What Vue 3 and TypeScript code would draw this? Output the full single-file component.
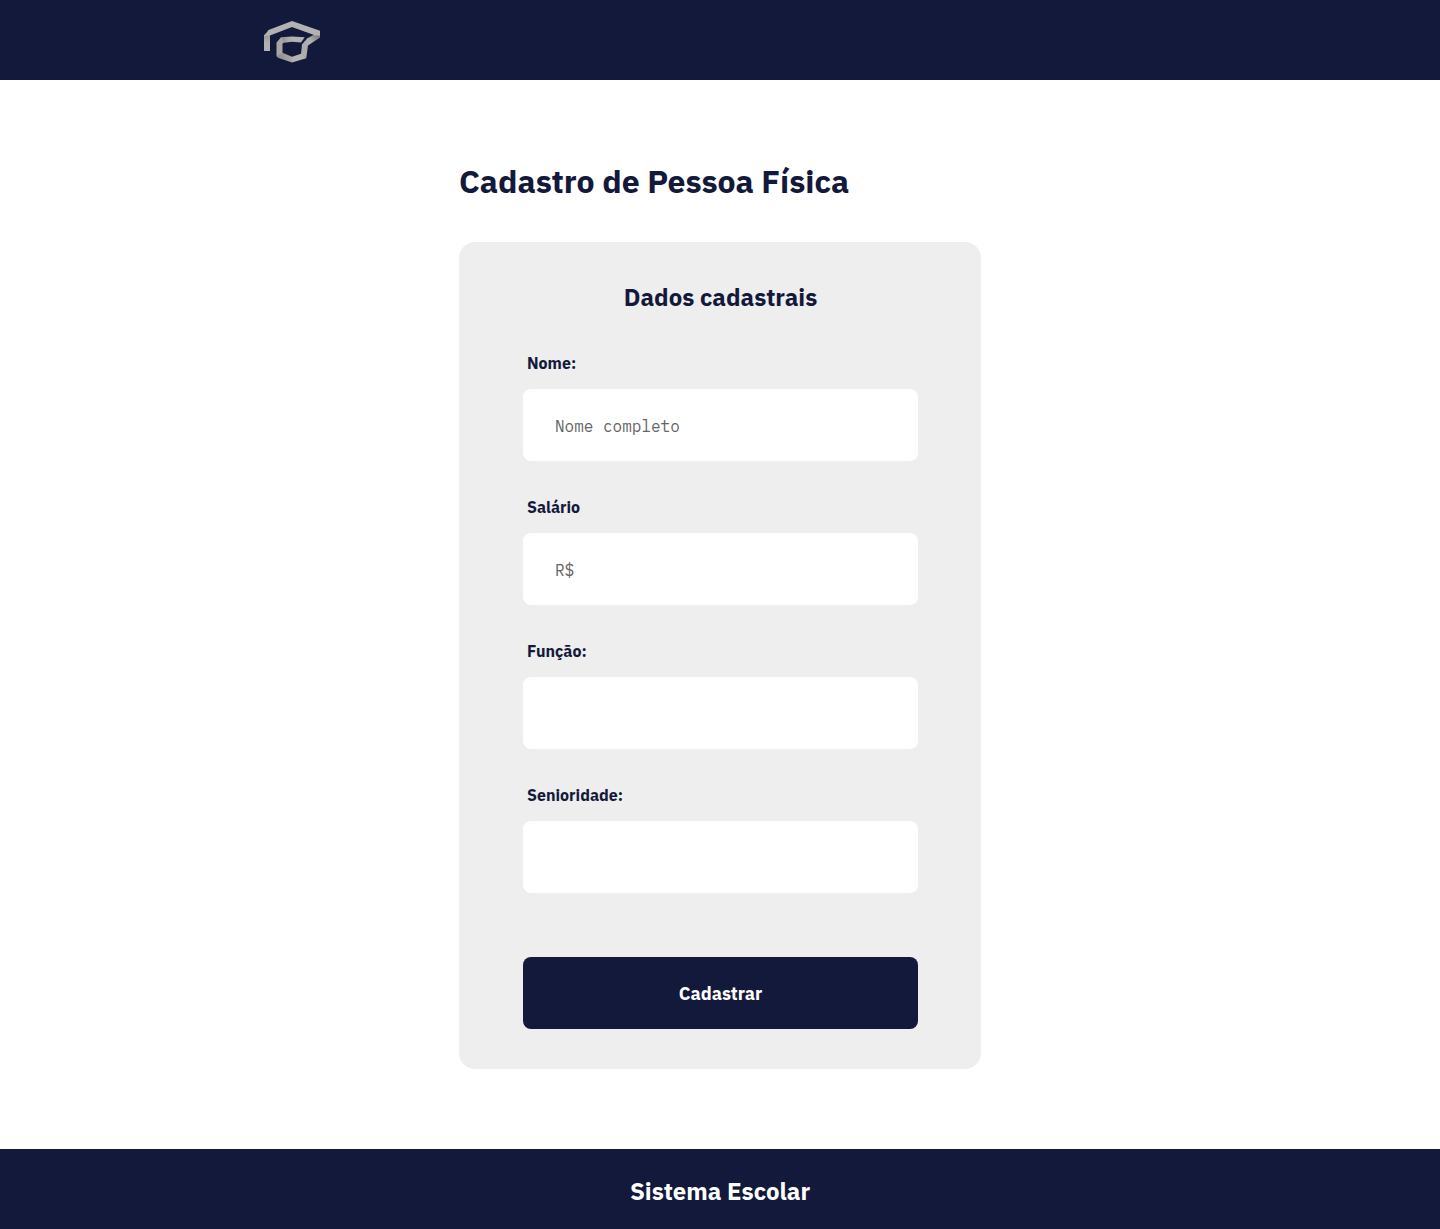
<script setup lang="ts">
import { reactive } from 'vue'

interface Field {
  id: 'nome' | 'salario' | 'funcao' | 'senioridade'
  label: string
  placeholder?: string
}

const fields: Field[] = [
  { id: 'nome', label: 'Nome:', placeholder: 'Nome completo' },
  { id: 'salario', label: 'Salário', placeholder: 'R$' },
  { id: 'funcao', label: 'Função:' },
  { id: 'senioridade', label: 'Senioridade:' },
]

const form = reactive({ nome: '', salario: '', funcao: '', senioridade: '' })
</script>

<template>
  <div class="page">
    <header class="header">
      <div class="container">
        <svg class="logo" viewBox="0 0 56 44" role="img" aria-label="Sistema Escolar">
          <defs>
            <linearGradient id="fold" x1="0" y1="0" x2="0" y2="1">
              <stop offset="0" stop-color="#858585" />
              <stop offset="0.6" stop-color="#b2b2b2" />
            </linearGradient>
            <linearGradient id="tail" x1="1" y1="0" x2="0" y2="1">
              <stop offset="0.2" stop-color="#7d7d7d" />
              <stop offset="0.6" stop-color="#b0b0b0" />
            </linearGradient>
            <linearGradient id="bar" x1="0" y1="0" x2="1" y2="0">
              <stop offset="0" stop-color="#858585" />
              <stop offset="0.5" stop-color="#b2b2b2" />
            </linearGradient>
            <linearGradient id="base" x1="0" y1="0" x2="1" y2="0">
              <stop offset="0" stop-color="#8c8c8c" />
              <stop offset="1" stop-color="#a8a8a8" />
            </linearGradient>
          </defs>
          <path d="M0 15 6 10V31H0Z" fill="url(#fold)" />
          <path d="M43 18.500 51 14 56 11.500V17.500L44 25.500 38 25Z" fill="url(#tail)" />
          <path d="M0 16 4.500 10 28 1 56 10.800V15.500L51.500 15.500 28 7 6 15.500Z" fill="#b2b2b2" />
          <path d="M38 24.500 41 21 44 25 42.300 38.300 37 34Z" fill="#adadad" />
          <path d="M17 17.200 28 16.500 40.800 17.200 37 22.500 28 21.800 18.500 23 14 21.500Z" fill="url(#bar)" />
          <path d="M17.300 17.200 19.500 22 18.500 24 18.500 33.500 14 37.300 12.500 36V22.500Z" fill="#a6a6a6" />
          <path d="M18.500 32.800 28 36.800V42.400L14 37.800 12.500 36Z" fill="url(#base)" />
          <path d="M28 36.800 37.700 33.500 42.300 38.300 28 42.400Z" fill="#b2b2b2" />
        </svg>
      </div>
    </header>

    <main class="main">
      <h1 class="title">Cadastro de Pessoa Física</h1>
      <form class="card" @submit.prevent>
        <h2 class="subtitle">Dados cadastrais</h2>
        <div class="fields">
          <div v-for="field in fields" :key="field.id" class="field">
            <label :for="field.id">{{ field.label }}</label>
            <input :id="field.id" v-model="form[field.id]" type="text" :placeholder="field.placeholder" />
          </div>
        </div>
        <button type="submit">Cadastrar</button>
      </form>
    </main>

    <footer class="footer">
      <p>Sistema Escolar</p>
    </footer>
  </div>
</template>

<style>
body {
  margin: 0;
  background: #fff;
}
</style>

<style scoped>
.page {
  display: flex;
  flex-direction: column;
  min-height: 100vh;
  color: #13193b;
  font-family: 'IBM Plex Sans', 'Noto Sans', sans-serif;
}

.header {
  background: #13193b;
}

.container {
  display: flex;
  align-items: center;
  box-sizing: border-box;
  max-width: 912px;
  height: 80px;
  margin: 0 auto;
  padding-top: 4px;
}

.logo {
  width: 56px;
  height: 44px;
}

.main {
  flex: 1;
  box-sizing: border-box;
  width: 100%;
  max-width: 522px;
  margin: 0 auto;
  padding: 80px 0;
}

.title {
  margin: 0 0 40px;
  font-size: 32px;
  line-height: 42px;
  font-weight: 700;
}

.card {
  padding: 40px 63px 40px 64px;
  border-radius: 16px;
  background: #eee;
}

.subtitle {
  margin: 0 0 40px;
  font-size: 24px;
  line-height: 31px;
  font-weight: 700;
  text-align: center;
}

.fields {
  display: flex;
  flex-direction: column;
  gap: 36px;
  margin-bottom: 64px;
}

.field {
  display: flex;
  flex-direction: column;
  gap: 16px;
}

label {
  padding-left: 4px;
  font-size: 16px;
  line-height: 20px;
  font-weight: 700;
}

input {
  box-sizing: border-box;
  width: 100%;
  height: 72px;
  padding: 2px 32px 0;
  border: 0;
  border-radius: 8px;
  background: #fff;
  color: #13193b;
  font-family: 'IBM Plex Mono', 'Liberation Mono', monospace;
  font-size: 16px;
}

input::placeholder {
  color: #666;
}

button {
  width: 100%;
  height: 72px;
  border: 0;
  border-radius: 8px;
  background: #13193b;
  color: #fff;
  font-family: inherit;
  font-size: 18px;
  font-weight: 700;
  cursor: pointer;
}

.footer {
  display: flex;
  align-items: center;
  justify-content: center;
  height: 80px;
  background: #13193b;
  color: #fff;
}

.footer p {
  margin: 0;
  padding-top: 4px;
  font-size: 24px;
  line-height: 32px;
  font-weight: 700;
}
</style>
